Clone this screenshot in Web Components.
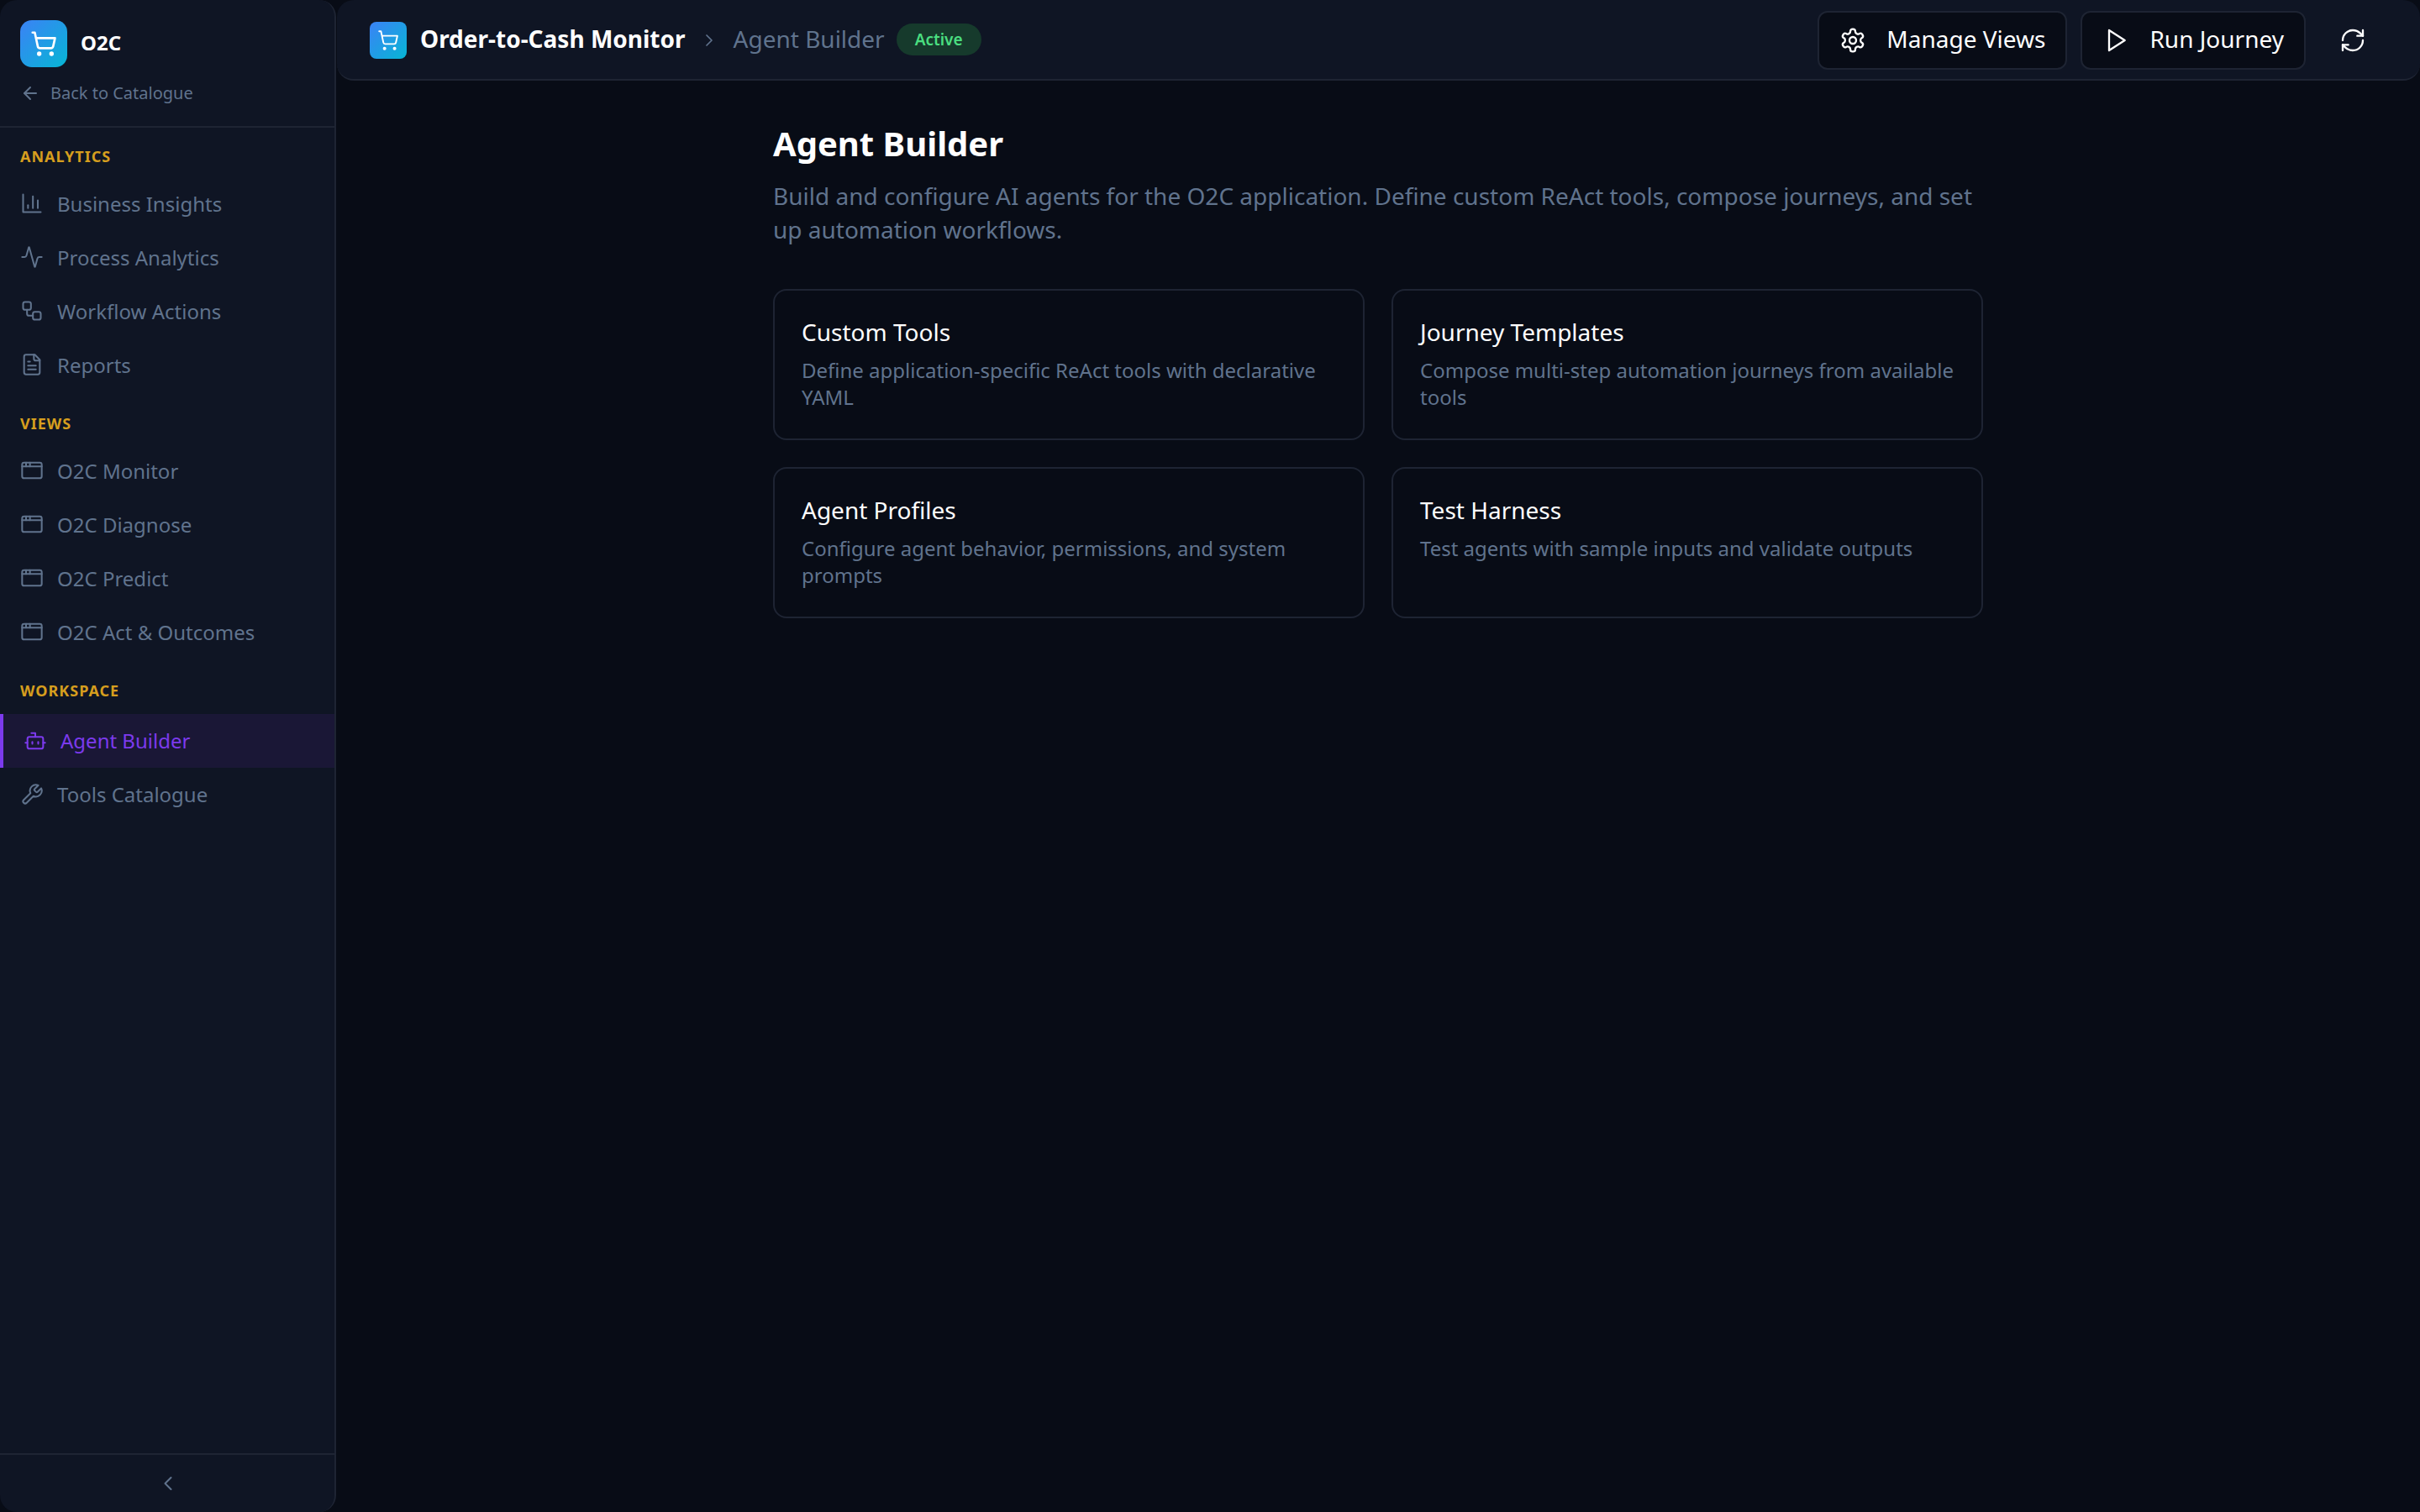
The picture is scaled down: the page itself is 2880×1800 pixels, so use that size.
<!DOCTYPE html>
<html lang="en">
<head>
<meta charset="utf-8">
<title>O2C - Agent Builder</title>
<style>
  html, body { margin: 0; height: 100%; background: #080c16; }
  body { font-family: "Noto Sans", sans-serif; }
</style>
</head>
<body>
<app-shell>
  <side-bar slot="side">
    <nav-section label="Analytics">
      <nav-item icon="chart">Business Insights</nav-item>
      <nav-item icon="activity">Process Analytics</nav-item>
      <nav-item icon="workflow">Workflow Actions</nav-item>
      <nav-item icon="file">Reports</nav-item>
    </nav-section>
    <nav-section label="Views">
      <nav-item icon="window">O2C Monitor</nav-item>
      <nav-item icon="window">O2C Diagnose</nav-item>
      <nav-item icon="window">O2C Predict</nav-item>
      <nav-item icon="window">O2C Act &amp; Outcomes</nav-item>
    </nav-section>
    <nav-section label="Workspace">
      <nav-item icon="bot" active>Agent Builder</nav-item>
      <nav-item icon="wrench">Tools Catalogue</nav-item>
    </nav-section>
  </side-bar>
  <top-bar slot="top"></top-bar>
  <agent-page>
    <builder-card heading="Custom Tools">Define application-specific ReAct tools with declarative YAML</builder-card>
    <builder-card heading="Journey Templates">Compose multi-step automation journeys from available tools</builder-card>
    <builder-card heading="Agent Profiles">Configure agent behavior, permissions, and system prompts</builder-card>
    <builder-card heading="Test Harness">Test agents with sample inputs and validate outputs</builder-card>
  </agent-page>
</app-shell>

<script>
  const ICONS = {
    cart: '<circle cx="8" cy="21" r="1"/><circle cx="19" cy="21" r="1"/><path d="M2.05 2.05h2l2.66 12.42a2 2 0 0 0 2 1.58h9.78a2 2 0 0 0 1.95-1.57l1.65-7.43H5.12"/>',
    back: '<path d="m12 19-7-7 7-7"/><path d="M19 12H5"/>',
    chart: '<path d="M3 3v18h18"/><path d="M18 17V9"/><path d="M13 17V5"/><path d="M8 17v-3"/>',
    activity: '<path d="M22 12h-2.48a2 2 0 0 0-1.93 1.46l-2.35 8.36a.25.25 0 0 1-.48 0L9.24 2.18a.25.25 0 0 0-.48 0l-2.35 8.36A2 2 0 0 1 4.49 12H2"/>',
    workflow: '<rect width="8" height="8" x="3" y="3" rx="2"/><path d="M7 11v4a2 2 0 0 0 2 2h4"/><rect width="8" height="8" x="13" y="13" rx="2"/>',
    file: '<path d="M15 2H6a2 2 0 0 0-2 2v16a2 2 0 0 0 2 2h12a2 2 0 0 0 2-2V7Z"/><path d="M14 2v4a2 2 0 0 0 2 2h4"/><path d="M10 9H8"/><path d="M16 13H8"/><path d="M16 17H8"/>',
    window: '<rect x="2" y="4" width="20" height="16" rx="2"/><path d="M10 4v4"/><path d="M2 8h20"/><path d="M6 4v4"/>',
    bot: '<path d="M12 8V4H8"/><rect width="16" height="12" x="4" y="8" rx="2"/><path d="M2 14h2"/><path d="M20 14h2"/><path d="M15 13v2"/><path d="M9 13v2"/>',
    wrench: '<path d="M14.7 6.3a1 1 0 0 0 0 1.4l1.6 1.6a1 1 0 0 0 1.4 0l3.77-3.77a6 6 0 0 1-7.94 7.94l-6.91 6.91a2.12 2.12 0 0 1-3-3l6.91-6.91a6 6 0 0 1 7.94-7.94l-3.76 3.76z"/>',
    settings: '<path d="M12.22 2h-.44a2 2 0 0 0-2 2v.18a2 2 0 0 1-1 1.73l-.43.25a2 2 0 0 1-2 0l-.15-.08a2 2 0 0 0-2.73.73l-.22.38a2 2 0 0 0 .73 2.73l.15.1a2 2 0 0 1 1 1.72v.51a2 2 0 0 1-1 1.74l-.15.09a2 2 0 0 0-.73 2.73l.22.38a2 2 0 0 0 2.73.73l.15-.08a2 2 0 0 1 2 0l.43.25a2 2 0 0 1 1 1.73V20a2 2 0 0 0 2 2h.44a2 2 0 0 0 2-2v-.18a2 2 0 0 1 1-1.73l.43-.25a2 2 0 0 1 2 0l.15.08a2 2 0 0 0 2.73-.73l.22-.39a2 2 0 0 0-.73-2.73l-.15-.08a2 2 0 0 1-1-1.74v-.5a2 2 0 0 1 1-1.74l.15-.09a2 2 0 0 0 .73-2.73l-.22-.38a2 2 0 0 0-2.73-.73l-.15.08a2 2 0 0 1-2 0l-.43-.25a2 2 0 0 1-1-1.73V4a2 2 0 0 0-2-2z"/><circle cx="12" cy="12" r="3"/>',
    play: '<polygon points="6 3 20 12 6 21 6 3"/>',
    refresh: '<path d="M3 12a9 9 0 0 1 9-9 9.75 9.75 0 0 1 6.74 2.74L21 8"/><path d="M21 3v5h-5"/><path d="M21 12a9 9 0 0 1-9 9 9.75 9.75 0 0 1-6.74-2.74L3 16"/><path d="M8 16H3v5"/>',
    right: '<path d="m9 18 6-6-6-6"/>',
    left: '<path d="m15 18-6-6 6-6"/>'
  };

  function icon(name, size, stroke = 1.75) {
    return `<svg width="${size}" height="${size}" viewBox="0 0 24 24" fill="none" stroke="currentColor" stroke-width="${stroke}" stroke-linecap="round" stroke-linejoin="round">${ICONS[name]}</svg>`;
  }

  class AppShell extends HTMLElement {
    constructor() {
      super();
      const shadow = this.attachShadow({ mode: 'open' });
      shadow.innerHTML = `
        <style>
          :host { display: flex; height: 100vh; overflow: hidden; background: #080c16; }
          .main { flex: 1; min-width: 0; display: flex; flex-direction: column; }
        </style>
        <slot name="side"></slot>
        <div class="main">
          <slot name="top"></slot>
          <slot></slot>
        </div>
      `;
    }
  }

  class SideBar extends HTMLElement {
    constructor() {
      super();
      const shadow = this.attachShadow({ mode: 'open' });
      shadow.innerHTML = `
        <style>
          :host {
            display: flex;
            flex-direction: column;
            box-sizing: border-box;
            width: 400px;
            height: 100%;
            background: #0f1524;
            border-right: 2px solid #1e2433;
            border-radius: 20px;
          }
          .brand {
            padding: 24px 24px 0;
            height: 126px;
            border-bottom: 2px solid #1e2433;
          }
          .logo-row { display: flex; align-items: center; gap: 16px; }
          .logo {
            width: 56px;
            height: 56px;
            border-radius: 14px;
            background: linear-gradient(135deg, #3b82f6, #06b6d4);
            color: #fff;
            display: flex;
            align-items: center;
            justify-content: center;
          }
          .name { color: #fff; font-size: 24px; font-weight: 700; padding-bottom: 3px; }
          .back {
            display: flex;
            align-items: center;
            gap: 12px;
            margin-top: 17px;
            color: #60738d;
            font-size: 20px;
            line-height: 28px;
          }
          .nav { flex: 1; }
          .foot {
            height: 68px;
            border-top: 2px solid #1e2433;
            color: #60738d;
            display: flex;
            align-items: center;
            justify-content: center;
          }
          .foot svg { margin-left: 2px; }
        </style>
        <div class="brand">
          <div class="logo-row">
            <div class="logo">${icon('cart', 32, 2)}</div>
            <span class="name">O2C</span>
          </div>
          <div class="back">${icon('back', 24, 2)}<span>Back to Catalogue</span></div>
        </div>
        <div class="nav"><slot></slot></div>
        <div class="foot">${icon('left', 28)}</div>
      `;
    }
  }

  class NavSection extends HTMLElement {
    constructor() {
      super();
      const shadow = this.attachShadow({ mode: 'open' });
      shadow.innerHTML = `
        <style>
          :host { display: block; padding-top: 22px; margin-bottom: 4px; }
          .label {
            padding: 0 24px;
            height: 36px;
            line-height: 24px;
            color: #d69e1e;
            font-size: 18px;
            font-weight: 700;
            letter-spacing: 1px;
            text-transform: uppercase;
          }
        </style>
        <div class="label">${this.getAttribute('label')}</div>
        <slot></slot>
      `;
    }
  }

  class NavItem extends HTMLElement {
    constructor() {
      super();
      const shadow = this.attachShadow({ mode: 'open' });
      shadow.innerHTML = `
        <style>
          :host {
            display: flex;
            align-items: center;
            gap: 16px;
            height: 64px;
            padding: 0 24px;
            color: #60738d;
            font-size: 24px;
          }
          :host([active]) {
            margin-top: 3.5px;
            padding-left: 24px;
            border-left: 4px solid #7c3aed;
            background: #1a1736;
            color: #7c3aed;
          }
          svg { flex: none; display: block; }
        </style>
        ${icon(this.getAttribute('icon'), 28)}
        <slot></slot>
      `;
    }
  }

  class TopBar extends HTMLElement {
    constructor() {
      super();
      const shadow = this.attachShadow({ mode: 'open' });
      shadow.innerHTML = `
        <style>
          :host {
            display: flex;
            align-items: center;
            box-sizing: border-box;
            height: 96px;
            margin-left: 1px;
            padding: 2px 38px 0 39px;
            background: #0f1524;
            border-bottom: 2px solid #1e2433;
            border-radius: 20px;
          }
          .logo {
            width: 44px;
            height: 44px;
            border-radius: 8px;
            background: linear-gradient(135deg, #3b82f6, #06b6d4);
            color: #fff;
            display: flex;
            align-items: center;
            justify-content: center;
          }
          .title { margin-left: 16px; color: #fff; font-size: 28px; font-weight: 700; padding-bottom: 4px; }
          .chev { margin: 0 17px 0 16px; color: #60738d; display: flex; }
          .crumb { color: #60738d; font-size: 28px; padding-bottom: 4px; }
          .badge {
            margin: 0 0 2px 14px;
            padding: 0 22px;
            height: 38px;
            line-height: 38px;
            border-radius: 19px;
            background: #163a2c;
            color: #4ade80;
            font-size: 19px;
            font-weight: 600;
          }
          .actions { margin-left: auto; display: flex; align-items: center; gap: 16px; }
          button {
            display: flex;
            align-items: center;
            gap: 24px;
            height: 70px;
            padding: 0 24px;
            border: 2px solid #1e2433;
            border-radius: 12px;
            background: #080c16;
            color: #fff;
            font: inherit;
            font-size: 28px;
          }
          button span { padding-bottom: 4px; }
          button.plain { background: none; border-color: transparent; margin-left: -2px; }
          svg { display: block; }
        </style>
        <div class="logo">${icon('cart', 26)}</div>
        <span class="title">Order-to-Cash Monitor</span>
        <span class="chev">${icon('right', 24)}</span>
        <span class="crumb">Agent Builder</span>
        <span class="badge">Active</span>
        <div class="actions">
          <button>${icon('settings', 32)}<span>Manage Views</span></button>
          <button>${icon('play', 32)}<span>Run Journey</span></button>
          <button class="plain">${icon('refresh', 32)}</button>
        </div>
      `;
    }
  }

  class AgentPage extends HTMLElement {
    constructor() {
      super();
      const shadow = this.attachShadow({ mode: 'open' });
      shadow.innerHTML = `
        <style>
          :host { display: block; flex: 1; padding: 51px 0 0; }
          .wrap { width: 1440px; margin: 0 auto; }
          h1 { margin: 0; color: #fff; font-size: 40px; line-height: 48px; font-weight: 700; }
          p { margin: 18px 0 0; color: #60738d; font-size: 28px; line-height: 40px; }
          .grid { margin-top: 51px; display: grid; grid-template-columns: 1fr 1fr; gap: 32px; }
        </style>
        <div class="wrap">
          <h1>Agent Builder</h1>
          <p>Build and configure AI agents for the O2C application. Define custom ReAct tools, compose journeys, and set up automation workflows.</p>
          <div class="grid"><slot></slot></div>
        </div>
      `;
    }
  }

  class BuilderCard extends HTMLElement {
    constructor() {
      super();
      const shadow = this.attachShadow({ mode: 'open' });
      shadow.innerHTML = `
        <style>
          :host {
            display: block;
            box-sizing: border-box;
            height: 180px;
            padding: 31px 32px 0;
            border: 2px solid #1e2433;
            border-radius: 16px;
          }
          h3 { margin: 0 0 12px; color: #fff; font-size: 28px; line-height: 36px; font-weight: 400; }
          div { color: #60738d; font-size: 24px; line-height: 32px; }
        </style>
        <h3>${this.getAttribute('heading')}</h3>
        <div><slot></slot></div>
      `;
    }
  }

  customElements.define('app-shell', AppShell);
  customElements.define('side-bar', SideBar);
  customElements.define('nav-section', NavSection);
  customElements.define('nav-item', NavItem);
  customElements.define('top-bar', TopBar);
  customElements.define('agent-page', AgentPage);
  customElements.define('builder-card', BuilderCard);
</script>
</body>
</html>
